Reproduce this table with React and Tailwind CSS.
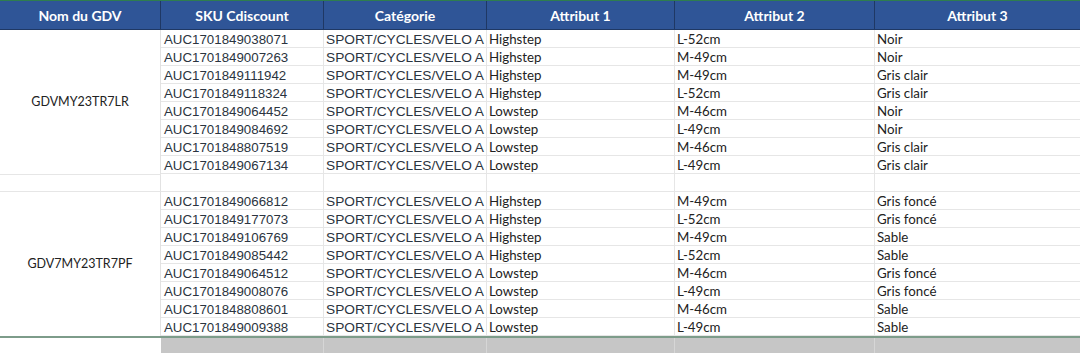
import React from "react";

const g1 = [
  ["AUC1701849038071", "Highstep", "L-52cm", "Noir"],
  ["AUC1701849007263", "Highstep", "M-49cm", "Noir"],
  ["AUC1701849111942", "Highstep", "M-49cm", "Gris clair"],
  ["AUC1701849118324", "Highstep", "L-52cm", "Gris clair"],
  ["AUC1701849064452", "Lowstep", "M-46cm", "Noir"],
  ["AUC1701849084692", "Lowstep", "L-49cm", "Noir"],
  ["AUC1701848807519", "Lowstep", "M-46cm", "Gris clair"],
  ["AUC1701849067134", "Lowstep", "L-49cm", "Gris clair"],
];
const g2 = [
  ["AUC1701849066812", "Highstep", "M-49cm", "Gris foncé"],
  ["AUC1701849177073", "Highstep", "L-52cm", "Gris foncé"],
  ["AUC1701849106769", "Highstep", "M-49cm", "Sable"],
  ["AUC1701849085442", "Highstep", "L-52cm", "Sable"],
  ["AUC1701849064512", "Lowstep", "M-46cm", "Gris foncé"],
  ["AUC1701849008076", "Lowstep", "L-49cm", "Gris foncé"],
  ["AUC1701848808601", "Lowstep", "M-46cm", "Sable"],
  ["AUC1701849009388", "Lowstep", "L-49cm", "Sable"],
];

const cols = "grid grid-cols-[161px_163px_163px_188px_200px_1fr]";
const cal = { fontFamily: "Lato, 'Open Sans', sans-serif" };
const ari = { fontFamily: "'Liberation Sans', Arial, sans-serif" };

function Group({ name, rows }) {
  return (
    <div className={cols}>
      <div
        className="row-span-8 flex items-center justify-center border-r border-[#e2e2e2] text-[12.5px] text-[#222]"
        style={cal}
      >
        {name}
      </div>
      {rows.map((r, i) => (
        <React.Fragment key={i}>
          <div
            className="h-[18px] border-r border-b border-[#e6e6e6] pl-[3px] text-[13.3px] leading-[19px] text-[#2b3440] whitespace-nowrap overflow-hidden"
            style={ari}
          >
            {r[0]}
          </div>
          <div
            className="h-[18px] border-r border-b border-[#e6e6e6] pl-[2px] text-[13.7px] leading-[19px] text-[#2b3440] whitespace-nowrap overflow-hidden"
            style={ari}
          >
            SPORT/CYCLES/VELO A
          </div>
          <div
            className="h-[18px] border-r border-b border-[#e6e6e6] pl-[2px] text-[13.3px] leading-[19px] text-[#222] whitespace-nowrap"
            style={cal}
          >
            {r[1]}
          </div>
          <div
            className="h-[18px] border-r border-b border-[#e6e6e6] pl-[2px] text-[13.3px] leading-[19px] text-[#222] whitespace-nowrap"
            style={cal}
          >
            {r[2]}
          </div>
          <div
            className="h-[18px] border-b border-[#e6e6e6] pl-[2px] text-[13.3px] leading-[19px] text-[#222] whitespace-nowrap"
            style={cal}
          >
            {r[3]}
          </div>
        </React.Fragment>
      ))}
    </div>
  );
}

export default function App() {
  const heads = ["Nom du GDV", "SKU Cdiscount", "Catégorie", "Attribut 1", "Attribut 2", "Attribut 3"];
  return (
    <div className="w-[1080px] h-[353px] bg-white overflow-hidden flex flex-col">
      <div className="h-[1px] bg-[#2e7d4f]" />
      <div className={`${cols} h-[29px] bg-[#2f5597] border-b border-[#1f3864]`}>
        {heads.map((h, i) => (
          <div
            key={h}
            className={`flex items-center justify-center text-white font-bold text-[14px] ${i < 5 ? "border-r border-[#1f3864]" : ""}`}
            style={cal}
          >
            {h}
          </div>
        ))}
      </div>
      <Group name="GDVMY23TR7LR" rows={g1} />
      <div className={`${cols} h-[18px]`}>
        {[0, 1, 2, 3, 4, 5].map((i) => (
          <div
            key={i}
            className={`border-b border-[#e6e6e6] ${i === 0 ? "border-t" : ""} ${i < 5 ? "border-r" : ""} ${i === 0 ? "border-r-[#e2e2e2]" : ""}`}
          />
        ))}
      </div>
      <Group name="GDV7MY23TR7PF" rows={g2} />
      <div className="h-[2px] bg-[#7d9c8a]" />
      <div className={`${cols} flex-1`}>
        <div className="bg-white" />
        <div className="bg-[#c6c6c6] border-r border-[#d6d6d6]" />
        <div className="bg-[#c6c6c6] border-r border-[#d6d6d6]" />
        <div className="bg-[#c6c6c6] border-r border-[#d6d6d6]" />
        <div className="bg-[#c6c6c6] border-r border-[#d6d6d6]" />
        <div className="bg-[#c6c6c6]" />
      </div>
    </div>
  );
}
